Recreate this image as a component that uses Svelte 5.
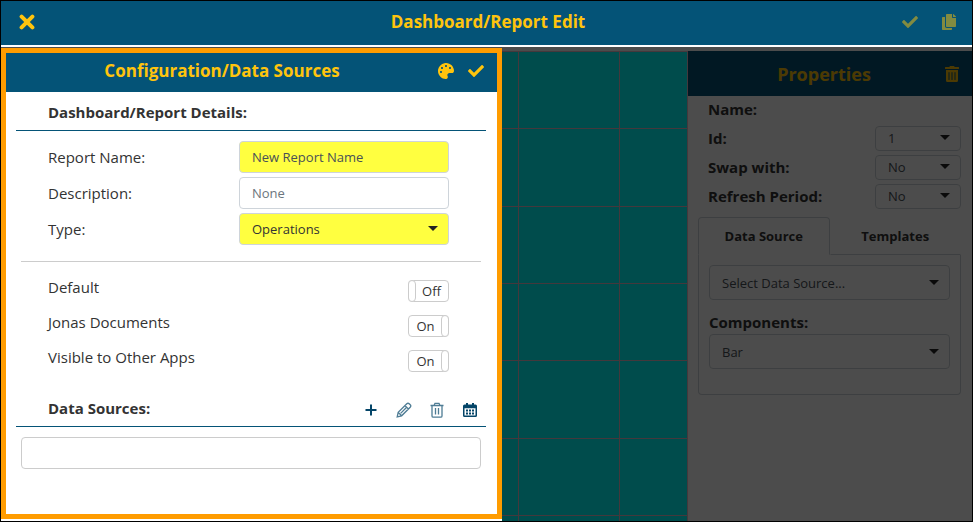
<script lang="ts">
	let reportName = $state('New Report Name');
	let description = $state('');
	let reportType = $state('Operations');

	let switches = $state([
		{ id: 'default', label: 'Default', on: false },
		{ id: 'jonas', label: 'Jonas Documents', on: true },
		{ id: 'visible', label: 'Visible to Other Apps', on: true }
	]);

	const properties = [
		{ id: 'prop-id', label: 'Id:', value: '1' },
		{ id: 'prop-swap', label: 'Swap with:', value: 'No' },
		{ id: 'prop-refresh', label: 'Refresh Period:', value: 'No' }
	];

	const cells = Array.from({ length: 21 });
</script>

{#snippet check()}
	<svg class="icon" viewBox="0 0 512 512" aria-hidden="true">
		<path
			d="M173.898 439.404l-166.4-166.4c-9.997-9.997-9.997-26.206 0-36.204l36.203-36.204c9.997-9.998 26.207-9.998 36.204 0L192 312.69 432.095 72.596c9.997-9.997 26.207-9.997 36.204 0l36.203 36.204c9.997 9.997 9.997 26.206 0 36.204l-294.4 294.401c-9.998 9.997-26.207 9.997-36.204-.001z"
		/>
	</svg>
{/snippet}

<div class="app">
	<header class="topbar">
		<button class="icon-btn" aria-label="Close">
			<svg class="icon" viewBox="0 0 16 16" aria-hidden="true">
				<path class="cross" d="M2.6 2.6l10.8 10.8M13.4 2.6L2.6 13.4" />
			</svg>
		</button>
		<h1>Dashboard/Report Edit</h1>
		<div class="topbar-actions">
			<button class="icon-btn" disabled aria-label="Save">{@render check()}</button>
			<button class="icon-btn" disabled aria-label="Copy">
				<svg class="icon" viewBox="0 0 448 512" aria-hidden="true">
					<path
						d="M320 448v40c0 13.255-10.745 24-24 24H24c-13.255 0-24-10.745-24-24V120c0-13.255 10.745-24 24-24h72v296c0 30.879 25.121 56 56 56h168zm0-344V0H152c-13.255 0-24 10.745-24 24v368c0 13.255 10.745 24 24 24h272c13.255 0 24-10.745 24-24V128H344c-13.2 0-24-10.8-24-24zm120.971-31.029L375.029 7.029A24 24 0 0 0 358.059 0H352v96h96v-6.059a24 24 0 0 0-7.029-16.97z"
					/>
				</svg>
			</button>
		</div>
	</header>

	<main class="workspace">
		<section class="drawer">
			<header class="drawer-header">
				<h2>Configuration/Data Sources</h2>
				<div class="drawer-actions">
					<button class="icon-btn" aria-label="Colors">
						<svg class="icon" viewBox="0 0 512 512" aria-hidden="true">
							<path
								d="M204.3 5C104.9 24.4 24.8 104.3 5.2 203.4c-37 187 131.7 326.4 258.8 306.7 41.2-6.4 61.4-54.6 42.5-91.7-23.1-45.4 9.9-98.4 60.9-98.4h79.7c35.8 0 64.8-29.6 64.9-65.3C511.5 97.1 368.1-26.9 204.3 5zM96 320c-17.7 0-32-14.3-32-32s14.3-32 32-32 32 14.3 32 32-14.3 32-32 32zm32-128c-17.7 0-32-14.3-32-32s14.3-32 32-32 32 14.3 32 32-14.3 32-32 32zm128-64c-17.7 0-32-14.3-32-32s14.3-32 32-32 32 14.3 32 32-14.3 32-32 32zm128 64c-17.7 0-32-14.3-32-32s14.3-32 32-32 32 14.3 32 32-14.3 32-32 32z"
							/>
						</svg>
					</button>
					<button class="icon-btn" aria-label="Apply">{@render check()}</button>
				</div>
			</header>

			<div class="drawer-body">
				<div class="section-title">
					<h3>Dashboard/Report Details:</h3>
				</div>

				<div class="fields">
					<label for="report-name">Report Name:</label>
					<input id="report-name" class="control required" type="text" bind:value={reportName} />
					<label for="description">Description:</label>
					<input
						id="description"
						class="control"
						type="text"
						placeholder="None"
						bind:value={description}
					/>
					<label for="report-type">Type:</label>
					<div class="select">
						<select id="report-type" class="control required" bind:value={reportType}>
							<option>Operations</option>
						</select>
					</div>
				</div>

				<div class="switches">
					{#each switches as item}
						<div class="switch-row">
							<label for={item.id}>{item.label}</label>
							<label class="switch" class:on={item.on}>
								<input id={item.id} type="checkbox" bind:checked={item.on} />
								<span>{item.on ? 'On' : 'Off'}</span>
							</label>
						</div>
					{/each}
				</div>

				<div class="section-title">
					<h3>Data Sources:</h3>
					<div class="tools">
						<button class="icon-btn" aria-label="Add">
							<svg class="icon" viewBox="0 0 16 16" aria-hidden="true">
								<path class="plus" d="M8 2.5v11M2.5 8h11" />
							</svg>
						</button>
						<button class="icon-btn" disabled aria-label="Edit">
							<svg class="icon line" viewBox="0 0 16 16" aria-hidden="true">
								<path
									d="M1.2 14.8l1-4.4L10.8 1.8a1.7 1.7 0 0 1 2.4 0l1 1a1.7 1.7 0 0 1 0 2.4L5.6 13.8zM9 3.6L12.4 7M2.2 10.4l3.4 3.4M4.6 11.4l5.6-5.6"
								/>
							</svg>
						</button>
						<button class="icon-btn" disabled aria-label="Delete">
							<svg class="icon line" viewBox="0 0 16 16" aria-hidden="true">
								<path
									d="M1.5 3.5h13M5 3.5l1-2.2h4l1 2.2M3 3.5v10.4a1.3 1.3 0 0 0 1.3 1.3h7.4a1.3 1.3 0 0 0 1.3-1.3V3.5M6.5 6v6.5M9.5 6v6.5"
								/>
							</svg>
						</button>
						<button class="icon-btn" aria-label="Schedule">
							<svg class="icon" viewBox="0 0 16 16" aria-hidden="true">
								<path
									fill-rule="evenodd"
									d="M4 1h2v1.500h4V1h2v1.500h1.500A1.500 1.500 0 0 1 15 4v9.500a1.500 1.500 0 0 1-1.500 1.500h-11A1.500 1.500 0 0 1 1 13.500V4a1.500 1.500 0 0 1 1.500-1.500H4zM2.500 6.200v7.300h11V6.200z"
								/>
								<path
									d="M4 7.500h2v2H4zM7 7.500h2v2H7zM10 7.500h2v2h-2zM4 10.500h2v2H4zM7 10.500h2v2H7zM10 10.500h2v2h-2z"
								/>
							</svg>
						</button>
					</div>
				</div>

				<input class="control source-filter" type="text" aria-label="Data Sources" />
			</div>
		</section>

		<div class="canvas">
			{#each cells as _}
				<div class="cell"></div>
			{/each}
		</div>

		<aside class="properties">
			<header class="properties-header">
				<h2>Properties</h2>
				<button class="icon-btn" aria-label="Remove">
					<svg class="icon" viewBox="0 0 448 512" aria-hidden="true">
						<path
							d="M32 464a48 48 0 0 0 48 48h288a48 48 0 0 0 48-48V128H32zm272-256a16 16 0 0 1 32 0v224a16 16 0 0 1-32 0zm-96 0a16 16 0 0 1 32 0v224a16 16 0 0 1-32 0zm-96 0a16 16 0 0 1 32 0v224a16 16 0 0 1-32 0zM432 32H312l-9.4-18.7A24 24 0 0 0 281.1 0H166.8a23.72 23.72 0 0 0-21.4 13.3L136 32H16A16 16 0 0 0 0 48v32a16 16 0 0 0 16 16h416a16 16 0 0 0 16-16V48a16 16 0 0 0-16-16z"
						/>
					</svg>
				</button>
			</header>

			<div class="property-list">
				<div class="property"><span>Name:</span></div>
				{#each properties as prop}
					<div class="property">
						<label for={prop.id}>{prop.label}</label>
						<div class="select small">
							<select id={prop.id} class="control">
								<option>{prop.value}</option>
							</select>
						</div>
					</div>
				{/each}
			</div>

			<div class="tabs">
				<div class="tab-list" role="tablist">
					<button class="tab active" role="tab" aria-selected="true">Data Source</button>
					<button class="tab" role="tab" aria-selected="false">Templates</button>
				</div>
				<div class="tab-body" role="tabpanel">
					<div class="select">
						<select class="control" aria-label="Data Source">
							<option>Select Data Source...</option>
						</select>
					</div>
					<label for="components">Components:</label>
					<div class="select">
						<select id="components" class="control">
							<option>Bar</option>
						</select>
					</div>
				</div>
			</div>
		</aside>

		<div class="backdrop"></div>
	</main>
</div>

<style>
	:global(body) {
		margin: 0;
	}

	.app {
		display: flex;
		flex-direction: column;
		box-sizing: border-box;
		min-height: 100vh;
		border: 1px solid #000;
		background: #fff;
		color: #333;
		font-family: 'Open Sans', 'Noto Sans', sans-serif;
		font-size: 15px;
		line-height: 24px;
	}

	.app * {
		box-sizing: border-box;
	}

	h1,
	h2,
	h3 {
		margin: 0;
		font-weight: 700;
	}

	h1,
	h2 {
		color: #ffc40d;
		font-size: 17px;
	}

	h3 {
		font-size: 15px;
	}

	/* Buttons and icons */

	.icon-btn {
		display: flex;
		padding: 0;
		border: 0;
		background: none;
		color: #ffc40d;
		cursor: pointer;
	}

	.icon-btn:disabled {
		opacity: 0.5;
	}

	.icon {
		width: 16px;
		height: 16px;
		fill: currentColor;
	}

	.cross {
		stroke: currentColor;
		stroke-width: 4;
		stroke-linecap: round;
	}

	.plus {
		stroke: currentColor;
		stroke-width: 2;
	}

	.line {
		fill: none;
		stroke: currentColor;
		stroke-width: 1.3;
	}

	/* Top bar */

	.topbar {
		display: grid;
		grid-template-columns: 1fr auto 1fr;
		align-items: center;
		height: 44px;
		margin-bottom: 2px;
		padding: 0 15px 2px 18px;
		background: #045377;
	}

	.topbar-actions {
		display: flex;
		justify-content: flex-end;
		gap: 23px;
	}

	/* Workspace */

	.workspace {
		position: relative;
		display: flex;
		flex: 1;
		background: #fff;
	}

	.backdrop {
		position: absolute;
		inset: 0;
		background: rgba(0, 0, 0, 0.7);
	}

	.canvas {
		display: grid;
		flex: 1;
		grid-template-columns: 17px 101px 1fr;
		grid-template-rows: repeat(6, 77fr) 6fr;
		margin-top: 4px;
		background: #0ff;
	}

	.cell {
		border-top: 1px solid #e3bbc8;
		border-right: 1px solid #e3bbc8;
	}

	/* Configuration drawer */

	.drawer {
		z-index: 1;
		width: 52%;
		max-width: 501px;
		margin: 1px 0 2px;
		border: 5px solid #ff9c00;
		background: #fff;
		box-shadow: 0 2px 0 #fff;
	}

	.drawer-header {
		display: flex;
		align-items: center;
		height: 39px;
		padding: 0 13px 4px 0;
		background: #045377;
	}

	.drawer-header h2 {
		flex: 1;
		text-align: center;
	}

	.drawer-actions {
		display: flex;
		gap: 14px;
	}

	.drawer-body {
		padding: 5px 11px 45px 10px;
	}

	.section-title {
		display: flex;
		align-items: center;
		justify-content: space-between;
		height: 34px;
		padding: 0 8px 3px 32px;
		border-bottom: 1px solid #045377;
	}

	.fields {
		display: grid;
		grid-template-columns: 1fr 210px;
		row-gap: 4px;
		align-items: center;
		margin: 0 5px;
		padding: 10px 32px 16px 27px;
		border-bottom: 1px solid #ccc;
	}

	.control {
		display: block;
		width: 100%;
		height: 32px;
		padding: 0 12px;
		border: 1px solid #ced4da;
		border-radius: 4px;
		background: #fff;
		color: #495057;
		font-family: inherit;
		font-size: 13px;
		appearance: none;
	}

	.control::placeholder {
		color: #6c757d;
		opacity: 1;
	}

	.control.required {
		background: #ffff40;
	}

	.fields select {
		color: #333;
	}

	.select {
		position: relative;
	}

	.select::after {
		content: '';
		position: absolute;
		top: 50%;
		right: 11px;
		margin-top: -3px;
		border: 5px solid transparent;
		border-top-color: #222;
		border-bottom: 0;
		pointer-events: none;
	}

	.switches {
		display: flex;
		flex-direction: column;
		gap: 11px;
		padding: 13px 37px 24px 32px;
	}

	.switch-row {
		display: flex;
		align-items: flex-start;
		justify-content: space-between;
	}

	.switch {
		display: flex;
		width: 41px;
		height: 22px;
		margin-top: 5px;
		margin-bottom: -3px;
		border: 1px solid #ccc;
		border-radius: 4px;
		font-size: 13px;
		line-height: 20px;
		cursor: pointer;
	}

	.switch.on {
		flex-direction: row-reverse;
	}

	.switch input {
		width: 8px;
		height: 22px;
		margin: -1px;
		border: 1px solid #ccc;
		border-radius: 4px;
		background: #fff;
		appearance: none;
	}

	.switch span {
		flex: 1;
		text-align: center;
	}

	.tools {
		display: flex;
		gap: 17px;
		padding-top: 4px;
	}

	.tools .icon-btn {
		color: #044568;
	}

	.tools .icon-btn:disabled {
		opacity: 0.7;
	}

	.source-filter {
		width: auto;
		min-width: calc(100% - 10px);
		margin: 10px 5px 0;
		border-color: #ccc;
	}

	/* Properties panel */

	.properties {
		width: 284px;
		margin-top: 4px;
		color: #333;
	}

	.properties-header {
		display: flex;
		align-items: center;
		height: 45px;
		padding-right: 12px;
		background: #045377;
	}

	.properties-header h2 {
		flex: 1;
		padding-left: 16px;
		font-size: 18px;
		text-align: center;
	}

	.property-list {
		padding: 0 11px 0 20px;
	}

	.property {
		display: flex;
		align-items: center;
		justify-content: space-between;
		height: 29px;
		padding-bottom: 3px;
		font-weight: 700;
	}

	.select.small {
		width: 86px;
	}

	.small .control {
		height: 25px;
	}

	.tabs {
		margin: 5px 11px 0 10px;
	}

	.tab-list {
		display: flex;
	}

	.tab {
		flex: 1;
		height: 38px;
		padding: 0;
		border: 1px solid transparent;
		border-bottom-color: #ced4da;
		border-radius: 4px 4px 0 0;
		background: none;
		color: #333;
		font-family: inherit;
		font-size: 13px;
		font-weight: 700;
	}

	.tab.active {
		border-color: #ced4da;
		border-bottom-color: transparent;
	}

	.tab-body {
		padding: 10px 10px 25px;
		border: 1px solid #ced4da;
		border-top: 0;
		border-radius: 0 0 4px 4px;
	}

	.tab-body .control {
		height: 35px;
	}

	.tab-body label {
		display: block;
		padding-top: 10px;
		font-weight: 700;
	}
</style>
